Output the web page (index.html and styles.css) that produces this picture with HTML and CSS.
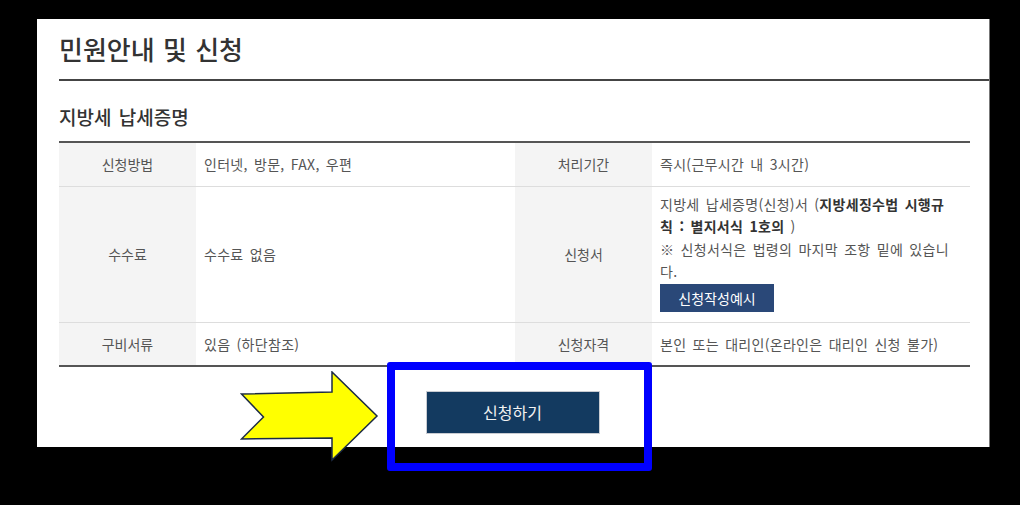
FILE: index.html
```html
<!DOCTYPE html>
<html lang="ko">
<head>
<meta charset="utf-8">
<link rel="stylesheet" href="styles.css">
</head>
<body>
<div class="panel">
  <h1 class="page-title">민원안내 및 신청</h1>
  <h2 class="sub-title">지방세 납세증명</h2>
  <table class="info">
    <tr class="r1">
      <th>신청방법</th>
      <td>인터넷, 방문, FAX, 우편</td>
      <th>처리기간</th>
      <td>즉시(근무시간 내 3시간)</td>
    </tr>
    <tr class="r2">
      <th>수수료</th>
      <td>수수료 없음</td>
      <th>신청서</th>
      <td class="form-cell">지방세 납세증명(신청)서 (<b>지방세징수법 시행규칙 : 별지서식 1호의</b> )<br>※ 신청서식은 법령의 마지막 조항 밑에 있습니다.<br><span class="small-btn">신청작성예시</span></td>
    </tr>
    <tr class="r3">
      <th>구비서류</th>
      <td>있음 (하단참조)</td>
      <th>신청자격</th>
      <td>본인 또는 대리인(온라인은 대리인 신청 불가)</td>
    </tr>
  </table>
  <div class="actions">
    <span class="apply-btn">신청하기</span>
  </div>
</div>
<svg class="arrow" width="150" height="100" viewBox="0 0 150 100">
  <polygon points="1.5,23 92,21 92,1 137,45 92,89 92,67 1.5,68 23.5,46" fill="#ffff00" stroke="#1c2b45" stroke-width="1.5" stroke-linejoin="miter"/>
</svg>
<div class="highlight"></div>
</body>
</html>
```
FILE: styles.css
```css
* { box-sizing: border-box; }
html, body {
  margin: 0;
  padding: 0;
  background: #000;
  width: 1020px;
  height: 505px;
  overflow: hidden;
  font-family: "Noto Sans CJK KR", "Noto Sans", sans-serif;
}
.panel {
  position: relative;
  margin: 19px 0 0 37px;
  width: 953px;
  height: 428px;
  background: #fff;
  padding-left: 22px;
  border-right: 1px solid #777;
}
.page-title {
  margin: 0;
  padding: 14px 0 14px 0;
  font-size: 26px;
  line-height: 32px;
  font-weight: 500;
  color: #333;
  letter-spacing: 0;
  word-spacing: 1px;
  border-bottom: 2px solid #444;
}
.sub-title {
  margin: 24px 0 12px 0;
  font-size: 19px;
  line-height: 24px;
  font-weight: 500;
  color: #333;
  letter-spacing: 0;
  word-spacing: 2px;
}
.info {
  width: 911px;
  border-collapse: collapse;
  border-top: 2px solid #555;
  border-bottom: 2px solid #555;
  font-size: 14px;
  color: #555;
}
.info th, .info td {
  border-top: 1px solid #ddd;
  padding: 0 8px;
  vertical-align: middle;
  text-align: left;
  line-height: 22.5px;
}
.info td {
  letter-spacing: 0.3px;
  word-spacing: 2px;
}
.info th {
  background: #f4f4f4;
  font-weight: 400;
  text-align: center;
  width: 137px;
}
.info td:nth-of-type(1) { width: 319px; }
.info td:nth-of-type(2) { width: 318px; }
.r1 th, .r1 td { height: 44px; border-top: 0; }
.r2 th, .r2 td { height: 136px; }
.r3 th, .r3 td { height: 44px; }
.form-cell { padding: 5px 18px 9px 8px !important; }
.form-cell b { color: #333; font-weight: 700; }
.small-btn {
  display: inline-block;
  margin-top: 1px;
  width: 114px;
  height: 28px;
  line-height: 28px;
  text-align: center;
  background: #2a4878;
  color: #fff;
  font-size: 14px;
  letter-spacing: 0;
}
.actions {
  display: flex;
  justify-content: center;
  padding-top: 24px;
  width: 907px;
}
.apply-btn {
  display: block;
  width: 174px;
  height: 43px;
  line-height: 41px;
  text-align: center;
  background: #133a60;
  border: 1px solid #c9ccd2;
  color: #f2f2f2;
  font-size: 16px;
}
.arrow {
  position: absolute;
  left: 240px;
  top: 371px;
}
.highlight {
  position: absolute;
  left: 387px;
  top: 362px;
  width: 265px;
  height: 109px;
  border: 8px solid #0000ff;
  border-radius: 3px;
}
```
